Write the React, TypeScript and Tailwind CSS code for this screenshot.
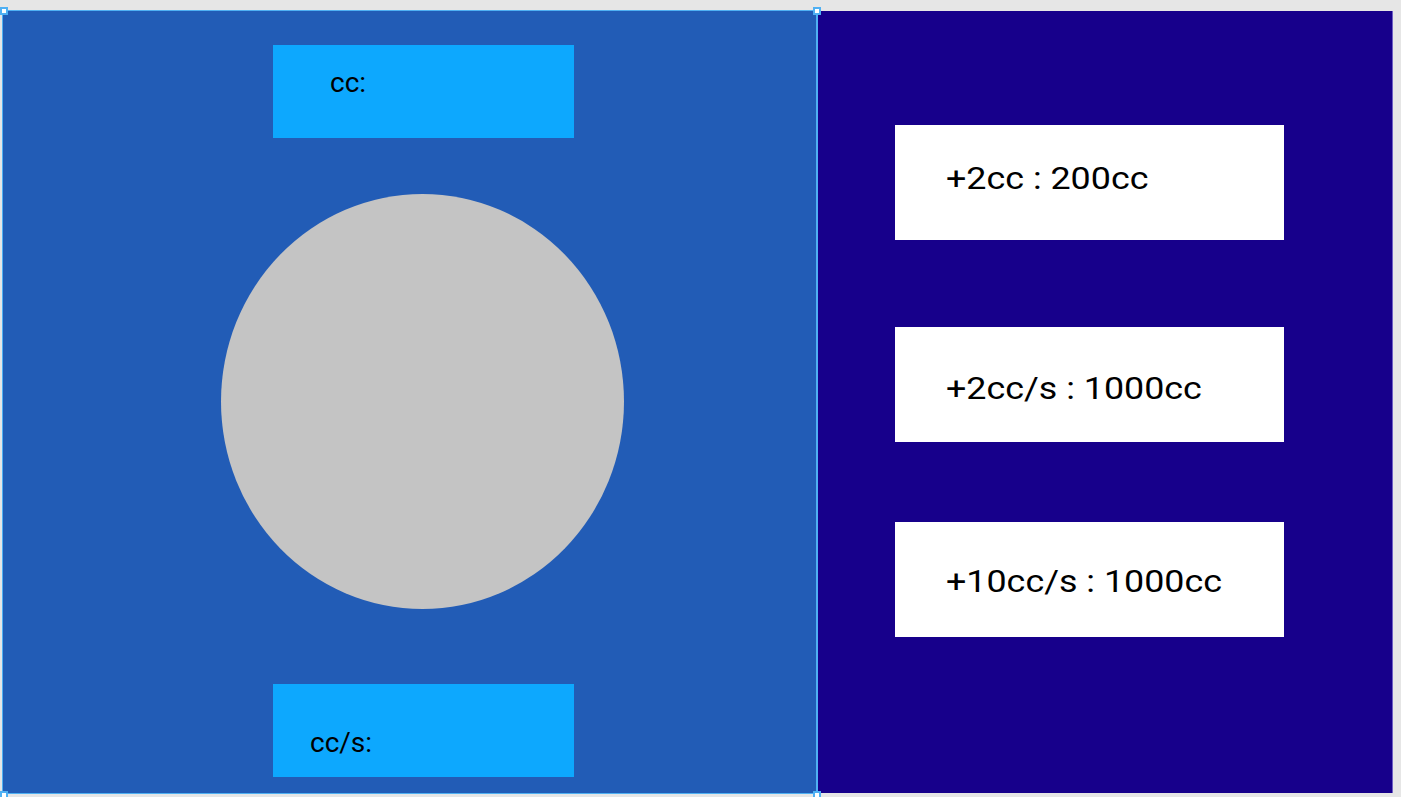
import React from "react";

const upgrades = [
    { label: "+2cc : 200cc", top: "mt-[114px]", pad: "pt-[37px]" },
    { label: "+2cc/s : 1000cc", top: "mt-[87px]", pad: "pt-[45px]" },
    { label: "+10cc/s : 1000cc", top: "mt-[80px]", pad: "pt-[43px]" },
];

function Handle({ pos }: { pos: string }) {
    return <div className={`absolute w-[8px] h-[8px] bg-white border-2 border-[#4fb0f3] ${pos}`}></div>;
}

export default function App() {
    return (
        <div className="w-full h-[797px] bg-[#e6e6e6] pt-[10px] flex font-['Roboto',sans-serif] text-black overflow-hidden">
            {/* CLICKER PANEL (selected) */}
            <div className="relative ml-[2px] w-[816px] h-[784px] shrink-0">
                <div className="w-full h-full bg-[#225cb6] border border-r-2 border-[#4fb0f3] flex flex-col">
                    <div className="mt-[34px] ml-[270px] w-[301px] h-[93px] bg-[#0da8fe] pl-[57px] pt-[24px]">
                        <p className="text-[28px] leading-none">cc:</p>
                    </div>

                    <div className="mt-[56px] ml-[218px] w-[403px] h-[415px] rounded-[50%] bg-[#c4c4c4]"></div>

                    <div className="mt-[75px] ml-[270px] w-[301px] h-[93px] bg-[#0da8fe] pl-[37px] pt-[45px]">
                        <p className="text-[28px] leading-none">cc/s:</p>
                    </div>
                </div>

                <Handle pos="-left-[2px] -top-[3px]" />
                <Handle pos="-right-[3px] -top-[3px]" />
                <Handle pos="-left-[2px] -bottom-[5px]" />
                <Handle pos="-right-[3px] -bottom-[5px]" />
            </div>

            {/* SHOP PANEL */}
            <div className="mt-[1px] w-[575px] h-[782px] shrink-0 bg-[#17008b] border-r border-[#6e5fc4] flex flex-col">
                {upgrades.map((u) => (
                    <div key={u.label} className={`${u.top} ml-[77px] w-[389px] h-[115px] bg-white pl-[51px] ${u.pad}`}>
                        <p className="text-[32px] leading-none whitespace-nowrap origin-left scale-x-[1.12]">{u.label}</p>
                    </div>
                ))}
            </div>
        </div>
    );
}
